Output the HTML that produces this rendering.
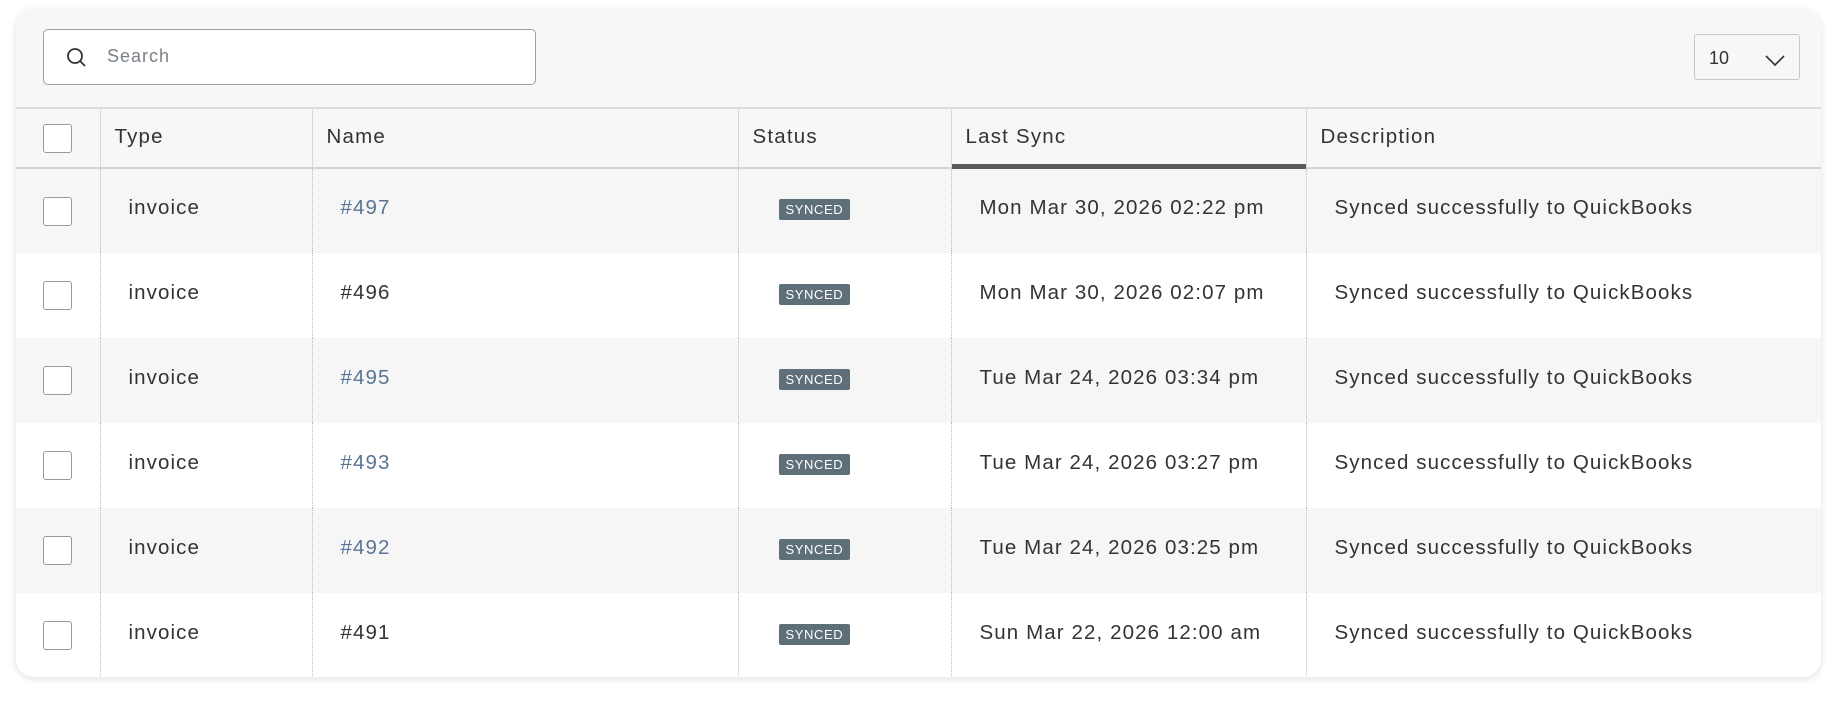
<!DOCTYPE html><html><head><style>
body{margin:0;width:1837px;height:702px;background:#fff;font-family:"Liberation Sans",sans-serif;color:#333;position:relative;overflow:hidden}
.card{position:absolute;left:16px;top:9px;width:1805px;height:668px;background:#f7f7f7;border-radius:18px;box-shadow:0 2px 8px rgba(0,0,0,.12);overflow:hidden}
.search{position:absolute;left:27px;top:20px;width:493px;height:56px;border:1.5px solid #9aa0a4;border-radius:5px;background:#fff;box-sizing:border-box}
.search span{position:absolute;left:63px;top:16px;font-size:18px;color:#7a8088;letter-spacing:1px}
.sel{position:absolute;left:1678px;top:25px;width:106px;height:46px;border:1px solid #c8c8c8;border-radius:3px;box-sizing:border-box;background:#f7f7f7}
.sel span{position:absolute;left:14px;top:13px;font-size:18px}
table{position:absolute;left:0;top:98px;border-collapse:collapse;width:1805px}
th{height:60px;text-align:left;font-weight:normal;font-size:20.5px;letter-spacing:1.2px;color:#333;border-top:2px solid #ddd;border-bottom:2px solid #d4d4d4;border-left:1px solid #d8d8d8;padding:0 0 2px 14px;box-sizing:border-box}
td{height:85px;font-size:20.5px;letter-spacing:1.1px;border-left:1px dotted #bbb;padding:0 0 6px 28px;box-sizing:border-box}
tr:nth-child(odd) td{background:#fff}
tr:nth-child(even) td{background:#f6f6f6}
th:first-child{border-left:none;padding:0 0 0 27px}
td:first-child{border-left:none;padding:0 0 0 27px}
.cb{display:block;width:29px;height:29px;border:1.5px solid #999;border-radius:3px;box-sizing:border-box;background:#fff}
.ls{position:relative}.ls:after{content:"";position:absolute;left:0;right:0;bottom:-2px;height:5px;background:#5a5a5a}
.b{display:inline-block;background:#5f6f7a;color:#fff;font-size:13px;padding:3px 7px;border-radius:2px;letter-spacing:.6px;margin-left:12px}
a{color:#5a7594;text-decoration:none}
</style></head><body><div class="card">
<div class="search"><svg style="position:absolute;left:22px;top:17px" width="22" height="22" viewBox="0 0 22 22"><circle cx="9" cy="9" r="7" fill="none" stroke="#333" stroke-width="1.8"/><path d="M14 14l5 5" stroke="#333" stroke-width="1.8"/></svg><span>Search</span></div>
<div class="sel"><span>10</span><svg style="position:absolute;left:70px;top:20px" width="20" height="12" viewBox="0 0 20 12"><path d="M1 1l9 9 9-9" fill="none" stroke="#333" stroke-width="1.6"/></svg></div>
<table><tr><th style="width:84px"><span class="cb"></span></th><th style="width:212px">Type</th><th style="width:426px">Name</th><th style="width:213px">Status</th><th class="ls" style="width:355px">Last Sync</th><th>Description</th></tr>
<tr><td><span class="cb"></span></td><td>invoice</td><td><a>#497</a></td><td><span class="b">SYNCED</span></td><td>Mon Mar 30, 2026 02:22 pm</td><td>Synced successfully to QuickBooks</td></tr>
<tr><td><span class="cb"></span></td><td>invoice</td><td>#496</td><td><span class="b">SYNCED</span></td><td>Mon Mar 30, 2026 02:07 pm</td><td>Synced successfully to QuickBooks</td></tr>
<tr><td><span class="cb"></span></td><td>invoice</td><td><a>#495</a></td><td><span class="b">SYNCED</span></td><td>Tue Mar 24, 2026 03:34 pm</td><td>Synced successfully to QuickBooks</td></tr>
<tr><td><span class="cb"></span></td><td>invoice</td><td><a>#493</a></td><td><span class="b">SYNCED</span></td><td>Tue Mar 24, 2026 03:27 pm</td><td>Synced successfully to QuickBooks</td></tr>
<tr><td><span class="cb"></span></td><td>invoice</td><td><a>#492</a></td><td><span class="b">SYNCED</span></td><td>Tue Mar 24, 2026 03:25 pm</td><td>Synced successfully to QuickBooks</td></tr>
<tr><td><span class="cb"></span></td><td>invoice</td><td>#491</td><td><span class="b">SYNCED</span></td><td>Sun Mar 22, 2026 12:00 am</td><td>Synced successfully to QuickBooks</td></tr>
</table></div></body></html>
